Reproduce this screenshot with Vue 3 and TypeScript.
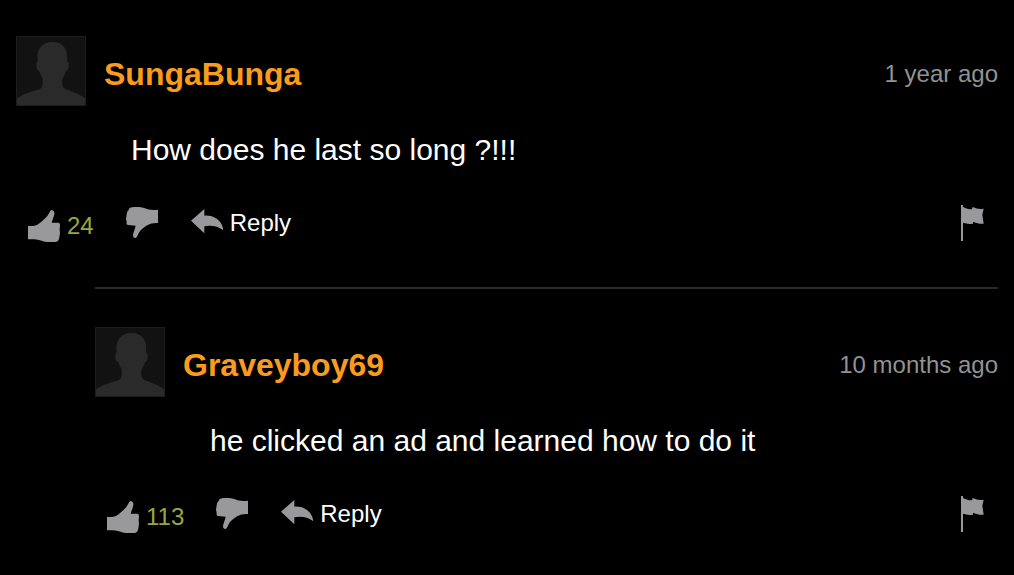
<script setup lang="ts">
interface Comment {
  id: number
  author: string
  age: string
  text: string
  votes: number
  nested: boolean
}

const comments: Comment[] = [
  { id: 1, author: 'SungaBunga', age: '1 year ago', text: 'How does he last so long ?!!!', votes: 24, nested: false },
  { id: 2, author: 'Graveyboy69', age: '10 months ago', text: 'he clicked an ad and learned how to do it', votes: 113, nested: true },
]
</script>

<template>
  <main class="thread">
    <article v-for="c in comments" :key="c.id" class="comment" :class="{ nested: c.nested }">
      <header class="head">
        <svg class="avatar" viewBox="0 0 210 210" aria-hidden="true">
          <rect width="210" height="210" fill="#121213" />
          <path
            d="M0 210V190C22 172 52 166 70 160C80 156 81 146 80 127C76 121 72 114 70 106C63 103 60 94 61 86C61 81 62 78 65 76C60 40 77 18 109 18C141 18 158 40 153 76C158 78 160 84 158 92C157 100 154 105 149 107C147 115 143 122 139 127C138 145 139 155 148 159C168 167 192 173 210 190V210Z"
            fill="#2a2a2b"
          />
          <rect x="1.5" y="1.5" width="207" height="207" fill="none" stroke="#1d1d1e" stroke-width="3" />
        </svg>
        <a class="author" href="#">{{ c.author }}</a>
        <time class="age">{{ c.age }}</time>
      </header>
      <p class="text">{{ c.text }}</p>
      <footer class="actions">
        <button type="button" class="up" aria-label="Like">
          <svg class="thumb" viewBox="0 0 96 96" aria-hidden="true">
            <path d="M0 47C10 49 20 48 28 44C38 38 49 28 58 18C63 12 65 3 70 0C76 0 80 5 79 12C78 21 73 29 71 38L91 38C95 39 96 42 96 46L95 58L96 70L94 82C93 88 91 94 86 95C73 97 56 97 45 94C36 91 28 88 18 88H0Z" />
          </svg>
          <span class="count">{{ c.votes }}</span>
        </button>
        <button type="button" class="down" aria-label="Dislike">
          <svg class="thumb" viewBox="0 0 96 96" aria-hidden="true">
            <path d="M96 8V48C84 47 73 49 65 54C55 60 46 67 40 75C36 82 34 90 29 93C24 94 21 90 21 84C22 75 27 67 29 56L6 54C2 53 1 50 2 45L0 35L2 22C3 16 4 12 8 9C9 4 13 1 18 1C32-1 46 0 57 4C66 8 79 10 96 8Z" />
          </svg>
        </button>
        <button type="button" class="reply">
          <svg class="arrow" viewBox="0 0 96 84" aria-hidden="true">
            <path d="M0 35L40 0V20C69 18 94 35 97 64C82 52 62 48 40 52V73Z" />
          </svg>
          <span>Reply</span>
        </button>
        <button type="button" class="report" aria-label="Report">
          <svg class="flag" viewBox="0 0 75 108" aria-hidden="true">
            <path d="M3 0H9V6C18 11 26 13 36 13L38 6C49 11 58 13 71 11L67 29L71 56C61 57 50 55 40 50L38 57C27 57 18 55 9 53V108H3Z" />
          </svg>
        </button>
      </footer>
    </article>
  </main>
</template>

<style>
body {
  margin: 0;
  background: #000;
}
</style>

<style scoped>
.thread {
  padding: 36px 16px 32px;
  font-family: "Liberation Sans", Arial, sans-serif;
  font-size: 24px;
  line-height: 28px;
}

.comment.nested {
  margin-top: 45px;
  margin-left: 79px;
  padding-top: 38px;
  border-top: 2px solid #2b2b2c;
}

.head {
  display: flex;
  align-items: center;
}

.avatar {
  flex: none;
  width: 70px;
  height: 70px;
  margin-right: 18px;
}

.author {
  margin-top: 6px;
  color: #f99c1e;
  font-size: 32px;
  font-weight: 700;
  line-height: 38px;
  text-decoration: none;
}

.age {
  margin-top: 6px;
  margin-left: auto;
  color: #929292;
}

.text {
  margin: 26px 0 36px 115px;
  color: #fff;
  font-size: 30px;
  line-height: 36px;
}

.actions {
  display: flex;
  align-items: center;
  padding: 0 13px 0 12px;
}

button {
  display: flex;
  align-items: center;
  padding: 0;
  border: 0;
  background: none;
  color: #fff;
  font: inherit;
  cursor: pointer;
}

svg {
  display: block;
}

.thumb {
  width: 32px;
  height: 32px;
  fill: #99999b;
}

.up {
  gap: 7px;
  margin-top: 6px;
}

.count {
  color: #98a83c;
}

.down {
  margin-left: 32px;
}

.reply {
  gap: 7px;
  margin-left: 33px;
}

.arrow {
  width: 32px;
  height: 28px;
  fill: #99999b;
}

.report {
  margin-left: auto;
}

.flag {
  width: 25px;
  height: 36px;
  fill: #99999b;
}
</style>
